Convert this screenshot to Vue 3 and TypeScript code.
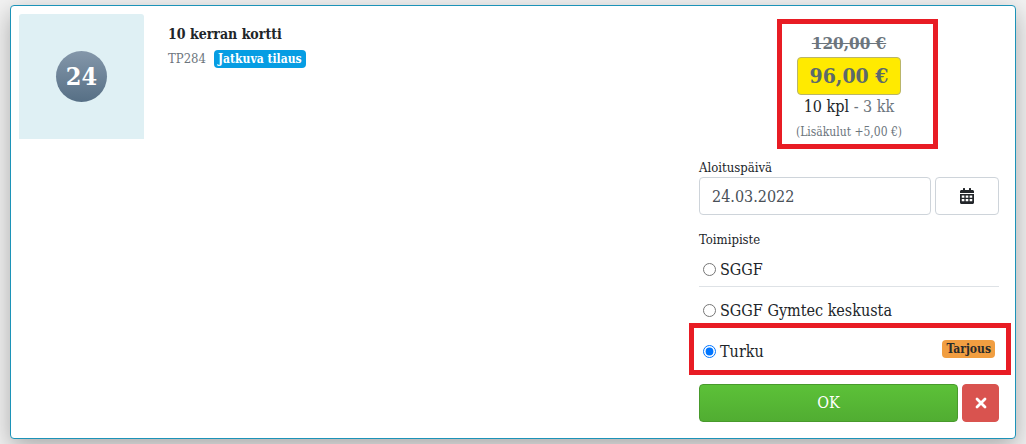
<script setup lang="ts">
import { ref } from 'vue'

interface Location {
  id: string
  name: string
  offer?: string
}

const locations: Location[] = [
  { id: 'sggf', name: 'SGGF' },
  { id: 'gymtec', name: 'SGGF Gymtec keskusta' },
  { id: 'turku', name: 'Turku', offer: 'Tarjous' },
]

const startDate = ref('24.03.2022')
const selected = ref('turku')
</script>

<template>
  <main class="page">
    <article class="card">
      <div class="thumb">
        <span class="disc">24</span>
      </div>

      <div class="info">
        <h1 class="title">10 kerran kortti</h1>
        <p class="meta">
          <span class="code">TP284</span>
          <span class="badge badge-info">Jatkuva tilaus</span>
        </p>
      </div>

      <form class="order" @submit.prevent>
        <div class="price">
          <del class="old">120,00 €</del>
          <strong class="new">96,00 €</strong>
          <span class="amount">10 kpl <span class="muted">- 3 kk</span></span>
          <span class="fees">(Lisäkulut +5,00 €)</span>
        </div>

        <label class="label" for="start">Aloituspäivä</label>
        <div class="date">
          <input id="start" v-model="startDate" class="input" type="text" />
          <button class="btn btn-calendar" type="button" aria-label="Kalenteri">
            <svg width="14" height="16" viewBox="0 0 448 512" aria-hidden="true">
              <path
                fill="currentColor"
                fill-rule="evenodd"
                d="M0 192h448v272c0 26-22 48-48 48H48c-26 0-48-22-48-48zM56 236v72h84v-72zM182 236v72h84v-72zM308 236v72h84v-72zM56 352v72h84v-72zM182 352v72h84v-72zM308 352v72h84v-72zM0 160v-48c0-26 22-48 48-48h48V16c0-9 7-16 16-16h32c9 0 16 7 16 16v48h128V16c0-9 7-16 16-16h32c9 0 16 7 16 16v48h48c26 0 48 22 48 48v48z"
              />
            </svg>
          </button>
        </div>

        <fieldset class="places">
          <legend class="label">Toimipiste</legend>
          <div
            v-for="place in locations"
            :key="place.id"
            class="place"
            :class="{ highlighted: place.offer }"
          >
            <input
              :id="place.id"
              v-model="selected"
              class="radio"
              type="radio"
              name="place"
              :value="place.id"
            />
            <label class="place-name" :for="place.id">{{ place.name }}</label>
            <span v-if="place.offer" class="badge badge-offer">{{ place.offer }}</span>
          </div>
        </fieldset>

        <div class="actions">
          <button class="btn btn-ok" type="submit">OK</button>
          <button class="btn btn-cancel" type="button" aria-label="Peruuta">
            <svg width="12" height="12" viewBox="0 0 12 12" aria-hidden="true">
              <path
                d="M2 2l8 8M10 2l-8 8"
                stroke="currentColor"
                stroke-width="2.8"
                stroke-linecap="round"
              />
            </svg>
          </button>
        </div>
      </form>
    </article>
  </main>
</template>

<style>
body {
  background: #f2f2f2;
}
</style>

<style scoped>
*,
*::after {
  box-sizing: border-box;
}

.page {
  padding: 5px 10px;
  overflow: hidden;
  color: #212529;
  font-family: 'Roboto Slab', 'DejaVu Serif Condensed', 'DejaVu Serif', serif;
  font-size: 16px;
  line-height: 24px;
}

.card {
  display: grid;
  grid-template-columns: 125px 1fr 300px;
  align-items: start;
  column-gap: 24px;
  padding: 8px 16px 16px 8px;
  background: #fff;
  border: 1px solid #1c93b8;
  border-radius: 4px;
  box-shadow: 0 8px 24px rgba(0, 0, 0, 0.3);
}

.thumb {
  display: flex;
  align-items: center;
  justify-content: center;
  height: 125px;
  background: #dff0f4;
  border-radius: 3px 3px 0 0;
}

.disc {
  width: 51px;
  height: 51px;
  border-radius: 50%;
  background: linear-gradient(#8497aa, #566f85);
  color: #fff;
  font-size: 25px;
  font-weight: 700;
  line-height: 51px;
  text-align: center;
}

.info {
  padding-top: 8px;
}

.title {
  margin: 0;
  font-size: 14px;
  font-weight: 700;
  line-height: 24px;
}

.meta {
  display: flex;
  align-items: center;
  gap: 8px;
  margin: 0;
  padding-top: 1px;
}

.code {
  color: #6c757d;
  font-size: 13px;
}

.fees {
  color: #6c757d;
  font-size: 12px;
  line-height: 26px;
}

.badge {
  padding: 0 4px;
  border-radius: 4px;
  font-size: 12px;
  font-weight: 700;
  line-height: 18px;
}

.badge-info {
  background: #069de3;
  color: #fff;
}

.badge-offer {
  margin-left: auto;
  background: #f19e41;
  color: #292b2c;
}

.price {
  position: relative;
  display: flex;
  flex-direction: column;
  align-items: center;
  padding-top: 16px;
}

.price::after {
  content: '';
  position: absolute;
  top: 5px;
  right: 61px;
  width: 161px;
  height: 130px;
  border: 5px solid #e81c24;
}

.old {
  color: #6c757d;
  font-size: 17px;
  font-weight: 700;
  line-height: 27px;
}

.new {
  padding: 0 12px;
  background: #ffea00;
  border: 1px solid #b9b56a;
  border-radius: 4px;
  color: #5c696b;
  font-size: 21px;
  line-height: 36px;
}

.muted {
  color: #6c757d;
}

.label {
  display: block;
  padding: 0;
  font-size: 13px;
  line-height: 16px;
}

.order > .label {
  padding: 15px 0 1px;
}

.date,
.actions {
  display: flex;
  gap: 4px;
}

.input {
  flex: 1;
  min-width: 0;
  height: 38px;
  padding: 0 12px;
  background: #fff;
  border: 1px solid #ced4da;
  border-radius: 4px;
  color: #495057;
  font: inherit;
}

.btn {
  display: flex;
  align-items: center;
  justify-content: center;
  height: 38px;
  padding: 0;
  border: 1px solid #ced4da;
  border-radius: 4px;
  font: inherit;
}

.btn-calendar {
  width: 64px;
  background: #fff;
  color: #212529;
}

.places {
  min-width: 0;
  margin: 0;
  padding: 0;
  border: 0;
}

.places > .label {
  padding-top: 17px;
}

.place {
  position: relative;
  display: flex;
  align-items: center;
  height: 41px;
  padding: 7px 4px 0;
  border-bottom: 1px solid #dee2e6;
}

.place:first-of-type {
  height: 39px;
  padding-top: 5px;
}

.highlighted {
  border-bottom-color: transparent;
}

.highlighted::after {
  content: '';
  position: absolute;
  inset: -5px -12px -7px -10px;
  border: 5px solid #e81c24;
  pointer-events: none;
}

.radio {
  width: 13px;
  height: 13px;
  margin: 0 4px 0 0;
}

.badge-offer {
  align-self: flex-start;
  margin-top: 5px;
}

.actions {
  padding-top: 15px;
}

.btn-ok {
  flex: 1;
  background: linear-gradient(#5cc138, #51ad32);
  border-color: #489a2c;
  color: #fff;
}

.btn-cancel {
  width: 37px;
  background: #d9534f;
  border-color: #d9534f;
  color: #fff;
}
</style>
